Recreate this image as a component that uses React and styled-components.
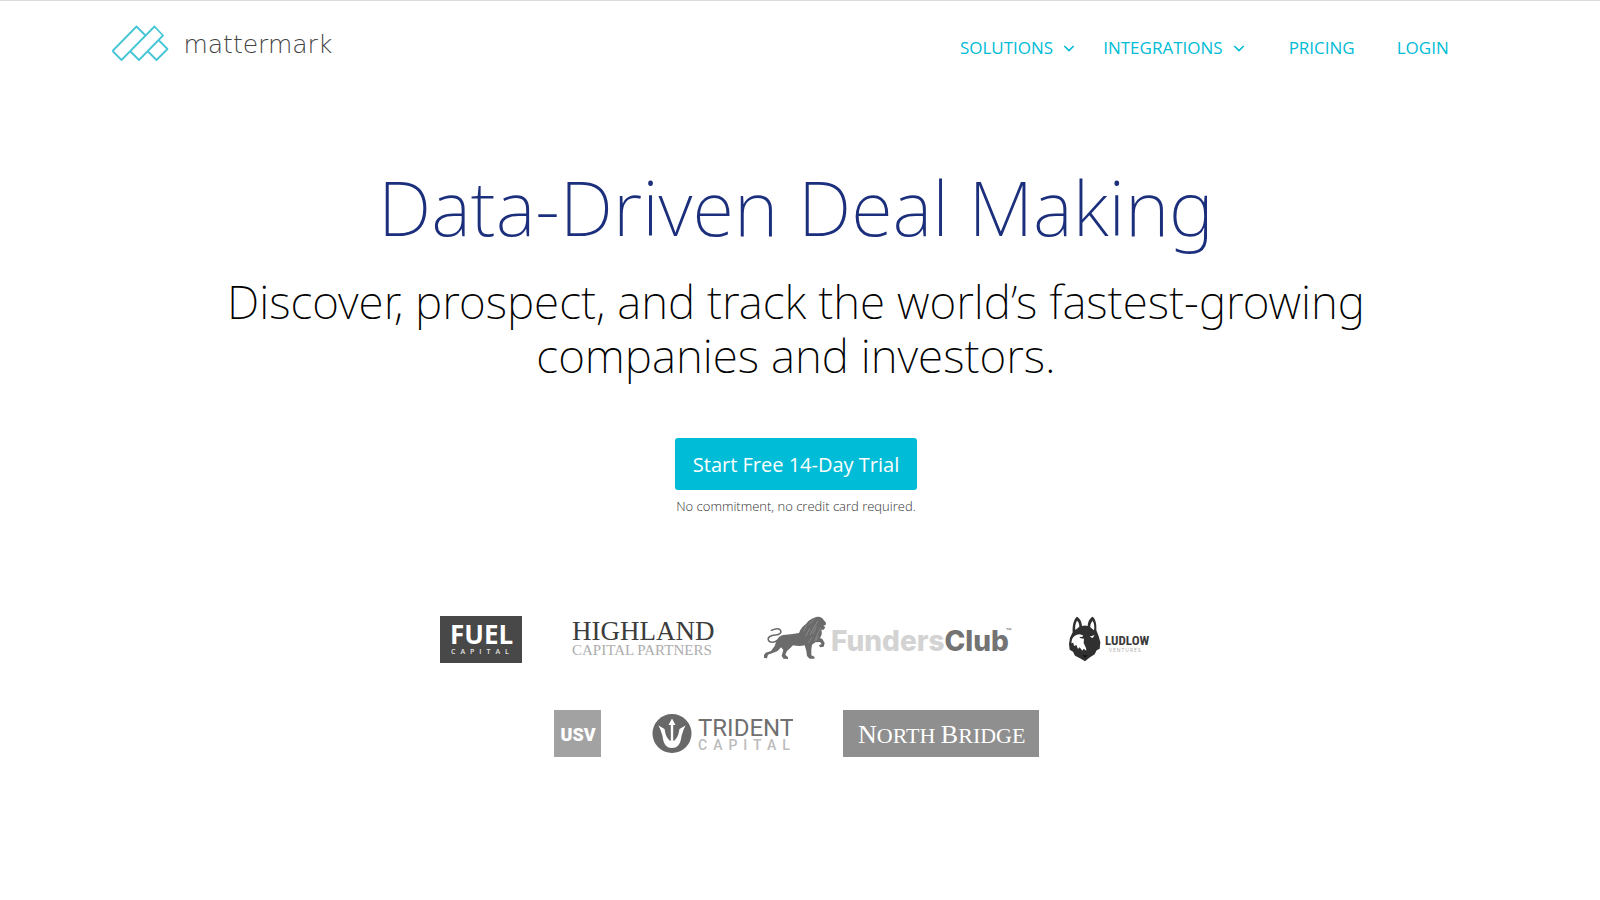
import React from "react";
import styled, { createGlobalStyle } from "styled-components";

const sans = '"Open Sans", "Noto Sans", sans-serif';
const display = '"Noto Sans", "Open Sans", sans-serif';
const cyan = "#00bcd6";

const GlobalStyle = createGlobalStyle`
  *, *::before, *::after { box-sizing: border-box; }
  body { margin: 0; background: #fff; font-family: ${sans}; color: #111; }
`;

const Page = styled.div`
  min-height: 100vh;
  padding-right: 8px;
  border-top: 1px solid #dcdcdc;
`;

const Header = styled.header`
  display: flex;
  align-items: center;
  justify-content: space-between;
  padding: 18px 9% 0 7%;
`;

const Brand = styled.a`
  display: flex;
  align-items: center;
  gap: 14px;
  color: #444;
  text-decoration: none;
  font: 200 25px/44px "DejaVu Sans Light", "DejaVu Sans", sans-serif;
`;

const BrandName = styled.span`
  padding-top: 4px;
`;

const Nav = styled.nav`
  display: flex;
  align-items: center;
  gap: 42px;
  padding-top: 10px;
`;

const MenuGroup = styled.div`
  display: flex;
  gap: 26px;
`;

const MenuButton = styled.button`
  display: flex;
  align-items: center;
  gap: 8px;
  padding: 0;
  border: 0;
  background: none;
  color: ${cyan};
  font: 400 17px/24px ${sans};
  cursor: pointer;
`;

const NavLink = styled.a`
  color: ${cyan};
  text-decoration: none;
  font: 400 17px/24px ${sans};
`;

const Hero = styled.main`
  display: flex;
  flex-direction: column;
  align-items: center;
  padding: 84px 24px 0;
  text-align: center;
`;

const Title = styled.h1`
  margin: 0;
  color: #1c2f7c;
  font-family: ${display};
  font-size: 76px;
  font-weight: 200;
  line-height: 112px;
`;

const Subtitle = styled.p`
  max-width: 1200px;
  margin: 11px 0 0;
  color: #000;
  font-family: ${display};
  font-size: 46px;
  font-weight: 200;
  line-height: 54px;
`;

const TrialButton = styled.button`
  margin-top: 56px;
  padding: 2px 18px 0;
  border: 0;
  border-radius: 3px;
  background: ${cyan};
  color: #fff;
  font: 400 20px/50px ${sans};
  cursor: pointer;
`;

const Note = styled.p`
  margin: 6px 0 0;
  color: #333;
  font-size: 13px;
  font-weight: 300;
  line-height: 20px;
`;

const Clients = styled.section`
  display: flex;
  flex-direction: column;
  align-items: center;
  gap: 47px;
  padding: 100px 24px 48px;
`;

const LogoRow = styled.div`
  display: flex;
  flex-wrap: wrap;
  justify-content: center;
  gap: 50px;
`;

const Logo = styled.svg`
  display: block;
  height: 47px;
  flex: none;
`;

const Chevron = () => (
  <svg width="16" height="16" viewBox="0 0 16 16" fill="none" stroke="currentColor" strokeWidth="1.6" aria-hidden="true">
    <path d="M3.3 6 8 10.6 12.7 6" />
  </svg>
);

const BrandMark = () => (
  <svg width="58" height="38" viewBox="0 0 58 38" fill="none" stroke="#45c6d6" strokeWidth="1.8" strokeLinejoin="round" aria-hidden="true">
    <path d="M1.500 27 25.500 2.500 34 11 M1.500 27 10.500 36 43.500 2.500 52 11.500 28 36 19.500 27.500" />
    <path d="M48 16.500 56.500 25 45.500 36 37 27.500" />
  </svg>
);

const FuelLogo = () => (
  <Logo width="82" viewBox="0 0 82 47" role="img" aria-label="Fuel Capital">
    <rect width="82" height="47" fill="#484848" />
    <text x="10" y="28" fill="#fff" fontFamily="Open Sans" fontWeight="700" fontSize="26">FUEL</text>
    <text x="11" y="38" fill="#e4e4e4" fontFamily="Open Sans" fontWeight="600" fontSize="7" letterSpacing="5">
      CAPITA<tspan letterSpacing="0">L</tspan>
    </text>
  </Logo>
);

const HighlandLogo = () => (
  <Logo width="142" viewBox="0 0 142 47" role="img" aria-label="Highland Capital Partners">
    <g fontFamily="Liberation Serif">
      <text x="0" y="24" fill="#3c3c3c" fontSize="27">HIGHLAND</text>
      <text x="0" y="39" fill="#adadad" fontSize="15">CAPITAL PARTNERS</text>
    </g>
  </Logo>
);

const FundersClubLogo = () => (
  <Logo width="254" viewBox="0 0 254 47" role="img" aria-label="FundersClub">
    <g transform="translate(-9 -9) scale(.33333)">
      <path
        d="M184 30C193 27 203 31 206 39L213 47 212 54 205 56 211 61 206 68 199 68C202 77 200 86 195 93L202 96 209 108 206 119 195 121 192 115 200 111 195 105 181 106 171 113 169 128 169 145 178 149 179 155 164 155 156 147 154 132 149 115C137 119 125 117 114 115L106 123 96 132 91 143 99 151 99 156 85 155 80 146 85 129 78 121 68 132 51 139 39 143 36 154 27 153 26 145 32 137 48 132 59 117 64 103C68 92 75 86 85 84L113 81 132 78C137 65 143 58 153 51 161 39 172 33 184 30Z"
        fill="#6b6b6b"
      />
      <path
        d="M67 100C58 108 43 108 40 99 37 90 48 85 61 84 75 83 82 76 75 68 69 63 58 66 49 70"
        fill="none" stroke="#6b6b6b" strokeWidth="4.500" strokeLinecap="round"
      />
      <path
        d="M179 35 162 53M189 42 173 68 166 84M155 55 145 73M197 61 187 84 179 102M184 58 174 82M164 64 152 88M170 91 160 109M190 88 183 101"
        fill="none" stroke="#999" strokeWidth="2"
      />
    </g>
    <text x="67" y="35" fontFamily="Inter" fontWeight="800" fontSize="28" fill="#d3d3d3">
      Funders<tspan fill="#737373">Club</tspan>
    </text>
    <text x="242" y="19" fontFamily="Inter" fontSize="9" fill="#777">™</text>
  </Logo>
);

const LudlowLogo = () => (
  <Logo width="84" viewBox="0 0 84 47" role="img" aria-label="Ludlow Ventures">
    <g transform="translate(-18 -17) scale(.33333)">
      <path
        d="M80 53C90 57 95 68 96 81Q105 78 113 81C114 68 119 57 128 53 137 60 140 76 139 94L146 112 151 130 149 149 140 154 134 166 118 176 105 187 90 178 75 170 69 158 59 152 57 135 60 116 68 100C67 81 70 64 80 53Z"
        fill="#303030"
      />
      <path
        d="M81 65C75 75 75 86 76 93L88 83C88 75 86 69 81 65ZM128 65C122 72 120 79 121 85L132 94C134 84 133 74 128 65ZM66 121C70 112 78 107 88 106L99 109 97 114 88 113 92 118 102 119 101 132 108 147 109 155 101 149 97 155 89 145 84 150 79 138 72 141 70 131 64 133ZM119 113 134 108 128 117Z"
        fill="#fff"
      />
      <path d="M98 169H113L105 177Z" fill="#111" />
    </g>
    <text x="37" y="29" fill="#3b3b3b" fontFamily="Liberation Sans Narrow, Roboto Condensed, Roboto" fontWeight="700" fontSize="13">LUDLOW</text>
    <text x="41" y="36" fill="#aaa" fontFamily="Open Sans" fontSize="5" letterSpacing="1">
      VENTURE<tspan letterSpacing="0">S</tspan>
    </text>
  </Logo>
);

const UsvLogo = () => (
  <Logo width="47" viewBox="0 0 47 47" role="img" aria-label="USV">
    <rect width="47" height="47" fill="#a2a2a2" />
    <text x="24" y="31" textAnchor="middle" fill="#fff" fontFamily="Roboto" fontWeight="900" fontSize="18">USV</text>
  </Logo>
);

const TridentLogo = () => (
  <Logo width="142" viewBox="0 0 142 47" role="img" aria-label="Trident Capital">
    <circle cx="21" cy="23.500" r="19.500" fill="#686868" />
    <path
      transform="translate(1 0)"
      d="M20 8.500 23.500 15H21.200V31Q26 29 27.500 19L33.500 15.500Q31 20 29.500 26C28.500 35 25 38 20 38 15 38 11.500 35 10.500 26Q9 20 6.500 15.500L12.500 19Q14 29 18.800 31V15H16.500Z"
      fill="#fff"
    />
    <text x="47" y="26" fill="#707070" fontFamily="Roboto" fontWeight="400" fontSize="24">TRIDENT</text>
    <text x="47" y="40" fill="#bcbcbc" fontFamily="Roboto" fontWeight="500" fontSize="14" letterSpacing="6">
      CAPITA<tspan letterSpacing="0">L</tspan>
    </text>
  </Logo>
);

const NorthBridgeLogo = () => (
  <Logo width="196" viewBox="0 0 196 47" role="img" aria-label="North Bridge">
    <rect width="196" height="47" fill="#8f8f8f" />
    <text x="15" y="33" fill="#fff" fontFamily="Liberation Serif" fontSize="26">
      N<tspan fontSize="22">ORTH </tspan>B<tspan fontSize="22">RIDGE</tspan>
    </text>
  </Logo>
);

export default function App() {
  return (
    <Page>
      <GlobalStyle />
      <Header>
        <Brand href="#">
          <BrandMark />
          <BrandName>mattermark</BrandName>
        </Brand>
        <Nav>
          <MenuGroup>
            <MenuButton type="button">SOLUTIONS <Chevron /></MenuButton>
            <MenuButton type="button">INTEGRATIONS <Chevron /></MenuButton>
          </MenuGroup>
          <NavLink href="#pricing">PRICING</NavLink>
          <NavLink href="#login">LOGIN</NavLink>
        </Nav>
      </Header>
      <Hero>
        <Title>Data-Driven Deal Making</Title>
        <Subtitle>Discover, prospect, and track the world’s fastest-growing companies and investors.</Subtitle>
        <TrialButton type="button">Start Free 14-Day Trial</TrialButton>
        <Note>No commitment, no credit card required.</Note>
      </Hero>
      <Clients>
        <LogoRow>
          <FuelLogo />
          <HighlandLogo />
          <FundersClubLogo />
          <LudlowLogo />
        </LogoRow>
        <LogoRow>
          <UsvLogo />
          <TridentLogo />
          <NorthBridgeLogo />
        </LogoRow>
      </Clients>
    </Page>
  );
}
